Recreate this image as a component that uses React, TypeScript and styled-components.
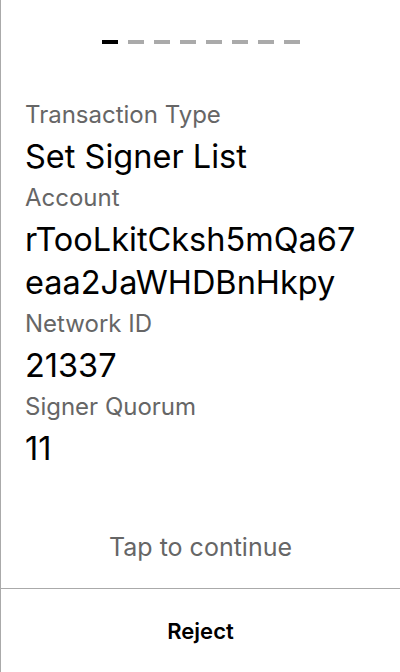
import React from "react";
import styled, { createGlobalStyle } from "styled-components";

const Global = createGlobalStyle`
  html, body { margin: 0; padding: 0; background: #fff; }
  body { font-family: Inter, "Noto Sans", sans-serif; }
`;

const Screen = styled.div`
  width: 400px;
  height: 672px;
  box-sizing: border-box;
  border-left: 1px solid #aaaaaa;
  display: flex;
  flex-direction: column;
  background: #fff;
`;

const Steps = styled.div`
  display: flex;
  justify-content: center;
  gap: 10px;
  padding-top: 40px;
`;

const Step = styled.div<{ $active?: boolean }>`
  width: 16px;
  height: 4px;
  background: ${(p) => (p.$active ? "#000" : "#aaaaaa")};
`;

const Body = styled.div`
  flex: 1;
  display: flex;
  flex-direction: column;
  padding: 51px 44px 0 24px;
`;

const Label = styled.div`
  font-size: 24px;
  line-height: 40px;
  color: #666666;
`;

const Value = styled.div`
  font-size: 32.5px;
  line-height: 43px;
  color: #000;
  word-break: break-all;
`;

const Hint = styled.div`
  text-align: center;
  font-size: 25px;
  line-height: 40px;
  color: #666666;
  padding-bottom: 21px;
`;

const Footer = styled.div`
  height: 83px;
  border-top: 1px solid #aaaaaa;
  display: flex;
  align-items: center;
  justify-content: center;
  font-size: 22px;
  font-weight: 600;
  color: #000;
`;

const fields = [
  { label: "Transaction Type", value: "Set Signer List" },
  { label: "Account", value: "rTooLkitCksh5mQa67eaa2JaWHDBnHkpy" },
  { label: "Network ID", value: "21337" },
  { label: "Signer Quorum", value: "11" },
];

export default function App() {
  return (
    <>
      <Global />
      <Screen>
        <Steps>
          {Array.from({ length: 8 }).map((_, i) => (
            <Step key={i} $active={i === 0} />
          ))}
        </Steps>
        <Body>
          {fields.map((f) => (
            <React.Fragment key={f.label}>
              <Label>{f.label}</Label>
              <Value>{f.value}</Value>
            </React.Fragment>
          ))}
        </Body>
        <Hint>Tap to continue</Hint>
        <Footer>Reject</Footer>
      </Screen>
    </>
  );
}
